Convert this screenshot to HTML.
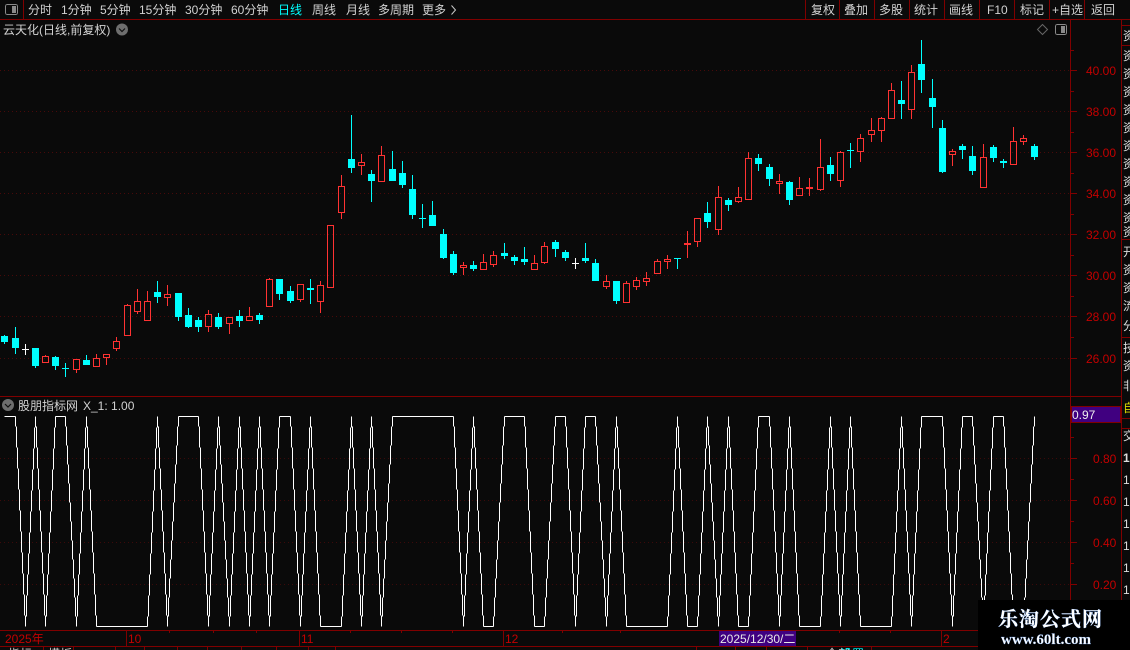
<!DOCTYPE html>
<html><head><meta charset="utf-8"><style>
html,body{margin:0;padding:0;background:#0a0a0a;overflow:hidden}
svg{display:block}
text{font-family:"WenQuanYi Zen Hei","Liberation Sans","Noto Sans CJK SC",sans-serif;font-size:12px}
.t{fill:#d2d2d2}
.a{fill:#c40000;font-family:"Liberation Sans",sans-serif}
.c{shape-rendering:crispEdges}
</style></head><body>
<svg width="1130" height="650" viewBox="0 0 1130 650" xmlns="http://www.w3.org/2000/svg">
<defs>
<path id="d" d="M0 0V10M1 10V31M2 31V52M3 52V73M4 73V94M5 94V115M6 115V136M7 136V157M8 157V178M9 178V199M10 199V210"/>
<path id="D" d="M0 0V10M1 10V29M2 29V48M3 48V67M4 67V86M5 86V105M6 105V124M7 124V143M8 143V162M9 162V181M10 181V200M11 200V210"/>
<path id="u" d="M0 210V200M1 200V179M2 179V158M3 158V137M4 137V116M5 116V95M6 95V74M7 74V53M8 53V32M9 32V11M10 11V0"/>
<path id="U" d="M0 210V200M1 200V181M2 181V162M3 162V143M4 143V124M5 124V105M6 105V86M7 86V67M8 67V48M9 48V29M10 29V10M11 10V0"/>
</defs>
<rect width="1130" height="650" fill="#0a0a0a"/>
<!-- grid -->
<path class="c" d="M0 70.5H1070M0 111.5H1070M0 152.5H1070M0 193.5H1070M0 234.5H1070M0 275.5H1070M0 316.5H1070M0 358.5H1070" stroke="#480a0a" stroke-dasharray="1 3" fill="none"/>
<path class="c" d="M0 458.5H1070M0 500.5H1070M0 542.5H1070M0 584.5H1070" stroke="#3c0a0a" stroke-dasharray="1 3" fill="none"/>
<!-- frame lines -->
<path class="c" stroke="#800000" fill="none" d="M0 19.5H1130M0 396.5H1121M0 630.5H1130M0 646.5H1130M1070.5 20V630M1121.5 20V650M23.5 0V19M805.5 0V19M839.5 0V19M874.5 0V19M909.5 0V19M944.5 0V19M979.5 0V19M1014.5 0V19M1049.5 0V19M1084.5 0V19M1121.5 25.5H1130M1121.5 45.5H1130M1121.5 239.5H1130M1121.5 337.5H1130M1121.5 418.5H1130M1121.5 428.5H1130
M1071 70.5h6M1071 91.5h3M1071 111.5h6M1071 132.5h3M1071 152.5h6M1071 173.5h3M1071 193.5h6M1071 214.5h3M1071 234.5h6M1071 255.5h3M1071 275.5h6M1071 296.5h3M1071 316.5h6M1071 337.5h3M1071 358.5h6M1071 50.5h3
M1071 437.5h3M1071 458.5h6M1071 479.5h3M1071 500.5h6M1071 521.5h3M1071 542.5h6M1071 563.5h3M1071 584.5h6M1071 605.5h3
M126.5 631V646M299.5 631V646M503.5 631V646M941.5 631V646M169.5 631v2M213.5 631v2M256.5 631v2M350.5 631v2M401.5 631v2M452.5 631v2M562.5 631v2M620.5 631v2M839.5 631v2M890.5 631v2
M43.5 647V650M73.5 647V650M115.5 647V650M144.5 647V650M177.5 647V650M207.5 647V650M241.5 647V650M276.5 647V650M308.5 647V650M335.5 647V650M696.5 647V650M735.5 647V650M766.5 647V650M807.5 647V650M871.5 647V650"/>
<!-- red candles -->
<path class="c" fill="none" stroke="#ff3232" d="M45.5 355v1M42.5 356.5h6v6h-6zM73.5 359.5h6v10h-6zM76.5 370V373M96.5 354V358M93.5 358.5h6v8h-6zM103.5 354.5h6v3h-6zM106.5 358V365M116.5 337V341M113.5 341.5h6v7h-6zM116.5 349V351M127.5 304V305M124.5 305.5h6v30h-6zM137.5 289V301M134.5 301.5h6v10h-6zM137.5 312V314M147.5 291V301M144.5 301.5h6v19h-6zM167.5 285V294M164.5 294.5h6v3h-6zM167.5 298V306M208.5 310V314M205.5 314.5h6v12h-6zM208.5 327V332M226.5 317.5h6v6h-6zM229.5 324V334M249.5 307V316M246.5 316.5h6v4h-6zM269.5 278V279M266.5 279.5h6v27h-6zM297.5 284.5h6v15h-6zM300.5 300V302M320.5 281V285M317.5 285.5h6v16h-6zM320.5 302V313M327.5 225.5h6v62h-6zM341.5 175V186M338.5 186.5h6v26h-6zM341.5 213V219M361.5 154V162M358.5 162.5h6v3h-6zM361.5 166V175M381.5 146V155M378.5 155.5h6v26h-6zM463.5 262V265M460.5 265.5h6v2h-6zM463.5 268V275M483.5 254V262M480.5 262.5h6v7h-6zM493.5 251V255M490.5 255.5h6v9h-6zM493.5 265V267M534.5 255V263M531.5 263.5h6v6h-6zM544.5 242V246M541.5 246.5h6v16h-6zM544.5 263V264M606.5 275V281M603.5 281.5h6v5h-6zM606.5 287V289M626.5 281V283M623.5 283.5h6v19h-6zM636.5 277V280M633.5 280.5h6v6h-6zM636.5 287V290M646.5 272V278M643.5 278.5h6v3h-6zM646.5 282V286M657.5 259V261M654.5 261.5h6v12h-6zM667.5 255V259M664.5 259.5h6v2h-6zM667.5 262V269M687.5 231V258M684 243.5h7M684 244.5h7M694.5 218.5h6v23h-6zM697.5 242V247M718.5 186V197M715.5 197.5h6v32h-6zM718.5 230V235M738.5 187V197M735.5 197.5h6v4h-6zM738.5 202V203M748.5 152V158M745.5 158.5h6v41h-6zM779.5 174V181M776.5 181.5h6v2h-6zM779.5 184V194M799.5 177V188M796.5 188.5h6v7h-6zM809.5 178V196M806 187.5h7M806 188.5h7M820.5 139V167M817.5 167.5h6v22h-6zM820.5 190V191M840.5 151V152M837.5 152.5h6v28h-6zM840.5 181V187M860.5 134V138M857.5 138.5h6v13h-6zM860.5 152V162M871.5 118V130M868.5 130.5h6v4h-6zM871.5 135V142M881.5 117V118M878.5 118.5h6v12h-6zM881.5 131V142M891.5 83V90M888.5 90.5h6v28h-6zM911.5 65V72M908.5 72.5h6v37h-6zM911.5 110V119M952.5 149V151M949.5 151.5h6v3h-6zM952.5 155V166M983.5 144V157M980.5 157.5h6v30h-6zM1013.5 127V141M1010.5 141.5h6v23h-6zM1023.5 135V138M1020.5 138.5h6v3h-6zM1023.5 142V145"/>
<!-- cyan wicks -->
<path class="c" fill="none" stroke="#00ffff" d="M4.5 335V344M15.5 327V354M35.5 348V368M55.5 356V370M65.5 363V377M62 368.5h7M86.5 355V365M157.5 281V303M178.5 293V321M188.5 308V328M198.5 317V332M218.5 313V329M239.5 310V327M259.5 313V324M279.5 279V300M290.5 286V303M310.5 279V304M351.5 115V173M371.5 170V202M392.5 151V181M402.5 161V188M412.5 175V219M422.5 204V228M419 218.5h7M432.5 201V226M443.5 229V259M453.5 251V275M473.5 261V271M504.5 243V259M514.5 255V265M524.5 247V265M555.5 240V257M565.5 250V261M585.5 243V263M595.5 259V281M616.5 281V304M677.5 258V269M674 258.5h7M707.5 202V228M728.5 198V211M758.5 154V171M769.5 164V186M789.5 181V205M830.5 157V181M850.5 143V168M847 150.5h7M901.5 81V119M921.5 40V93M932.5 79V128M942.5 120V173M962.5 144V159M972.5 146V175M993.5 145V162M1003.5 159V168M1000 161.5h7M1000 162.5h7M1034.5 144V160"/>
<!-- cyan bodies -->
<path class="c" fill="#00ffff" d="M1 336h7v6h-7zM12 338h7v10h-7zM32 348h7v18h-7zM52 357h7v9h-7zM83 360h7v5h-7zM154 292h7v5h-7zM175 293h7v24h-7zM185 315h7v12h-7zM195 320h7v7h-7zM215 317h7v10h-7zM236 316h7v5h-7zM256 315h7v5h-7zM276 279h7v15h-7zM287 291h7v10h-7zM307 288h7v2h-7zM348 159h7v9h-7zM368 174h7v7h-7zM389 169h7v12h-7zM399 173h7v12h-7zM409 189h7v26h-7zM429 215h7v11h-7zM440 234h7v24h-7zM450 254h7v19h-7zM470 265h7v4h-7zM501 253h7v3h-7zM511 257h7v4h-7zM521 259h7v3h-7zM552 242h7v7h-7zM562 252h7v6h-7zM582 258h7v3h-7zM592 263h7v18h-7zM613 281h7v20h-7zM704 213h7v9h-7zM725 200h7v5h-7zM755 158h7v6h-7zM766 167h7v12h-7zM786 182h7v18h-7zM827 165h7v9h-7zM898 100h7v4h-7zM918 64h7v16h-7zM929 98h7v9h-7zM939 128h7v44h-7zM959 146h7v4h-7zM969 156h7v15h-7zM990 147h7v11h-7zM1031 146h7v11h-7z"/>
<!-- white crosses -->
<path class="c" fill="none" stroke="#fff" d="M25.5 344V355M22 349.5h7M575.5 258V269M572 263.5h7"/>
<!-- indicator -->
<g class="c" fill="none" stroke="#fff">
<path d="M4.5 416.5H15.5M55.5 416.5H65.5M178.5 416.5H198.5M279.5 416.5H290.5M392.5 416.5H453.5M504.5 416.5H524.5M555.5 416.5H565.5M585.5 416.5H595.5M758.5 416.5H769.5M921.5 416.5H942.5M962.5 416.5H972.5M993.5 416.5H1003.5M96.5 626.5H147.5M320.5 626.5H341.5M483.5 626.5H493.5M534.5 626.5H544.5M626.5 626.5H667.5M687.5 626.5H697.5M738.5 626.5H748.5M799.5 626.5H820.5M860.5 626.5H891.5M1013.5 626.5H1023.5"/>
<g transform="translate(0.5 416.5)">
<use href="#d" x="15"/><use href="#u" x="25"/><use href="#d" x="35"/><use href="#u" x="45"/><use href="#D" x="65"/><use href="#u" x="76"/><use href="#d" x="86"/><use href="#u" x="147"/><use href="#d" x="157"/><use href="#U" x="167"/><use href="#d" x="198"/><use href="#u" x="208"/><use href="#D" x="218"/><use href="#u" x="229"/><use href="#d" x="239"/><use href="#u" x="249"/><use href="#d" x="259"/><use href="#u" x="269"/><use href="#d" x="290"/><use href="#u" x="300"/><use href="#d" x="310"/><use href="#u" x="341"/><use href="#d" x="351"/><use href="#u" x="361"/><use href="#d" x="371"/><use href="#U" x="381"/><use href="#d" x="453"/><use href="#u" x="463"/><use href="#d" x="473"/><use href="#U" x="493"/><use href="#d" x="524"/><use href="#U" x="544"/><use href="#d" x="565"/><use href="#u" x="575"/><use href="#D" x="595"/><use href="#u" x="606"/><use href="#d" x="616"/><use href="#u" x="667"/><use href="#d" x="677"/><use href="#u" x="697"/><use href="#D" x="707"/><use href="#u" x="718"/><use href="#d" x="728"/><use href="#u" x="748"/><use href="#d" x="769"/><use href="#u" x="779"/><use href="#d" x="789"/><use href="#u" x="820"/><use href="#d" x="830"/><use href="#u" x="840"/><use href="#d" x="850"/><use href="#u" x="891"/><use href="#d" x="901"/><use href="#u" x="911"/><use href="#d" x="942"/><use href="#u" x="952"/><use href="#D" x="972"/><use href="#u" x="983"/><use href="#d" x="1003"/><use href="#U" x="1023"/>
</g>
</g>
<!-- toolbar icon -->
<rect x="5.5" y="4.5" width="12" height="10" rx="2" fill="none" stroke="#8a8a8a" class="c"/><rect x="12" y="6" width="4" height="7" fill="#8a8a8a" class="c"/>
<!-- toolbar text -->
<g class="t">
<text x="28" y="14">分时</text><text x="61" y="14">1分钟</text><text x="100" y="14">5分钟</text><text x="139" y="14">15分钟</text><text x="185" y="14">30分钟</text><text x="231" y="14">60分钟</text>
<text x="278" y="14" style="fill:#00ffff">日线</text><text x="312" y="14">周线</text><text x="346" y="14">月线</text><text x="378" y="14">多周期</text><text x="422" y="14">更多</text>
<text x="811" y="14">复权</text><text x="844" y="14">叠加</text><text x="879" y="14">多股</text><text x="914" y="14">统计</text><text x="949" y="14">画线</text><text x="987" y="14">F10</text><text x="1020" y="14">标记</text><text x="1052" y="14">+自选</text><text x="1091" y="14">返回</text>
<text x="3" y="34">云天化(日线,前复权)</text>
<text x="18" y="410">股朋指标网</text><text x="83" y="410">X_1: 1.00</text>
</g>
<path d="M451.5 5.5l4 4.5-4 4.5" fill="none" stroke="#c8c8c8"/>
<!-- circle icons -->
<circle cx="122" cy="29.5" r="6" fill="#6e6e6e"/><path d="M119 28.5l3 3 3-3" fill="none" stroke="#111" stroke-width="1.2"/>
<circle cx="8" cy="405" r="6" fill="#6e6e6e"/><path d="M5 404l3 3 3-3" fill="none" stroke="#111" stroke-width="1.2"/>
<!-- diamond + panel icon -->
<path d="M1042.5 24.5l5 5-5 5-5-5z" fill="none" stroke="#666"/>
<rect x="1055.5" y="24.5" width="11" height="10" rx="2" fill="none" stroke="#8a8a8a" class="c"/><rect x="1061" y="26" width="4" height="7" fill="#8a8a8a" class="c"/>
<!-- axis labels -->
<g class="a"><text class="a" x="1086" y="75">40.00</text><text class="a" x="1086" y="116">38.00</text><text class="a" x="1086" y="157">36.00</text><text class="a" x="1086" y="198">34.00</text><text class="a" x="1086" y="239">32.00</text><text class="a" x="1086" y="280">30.00</text><text class="a" x="1086" y="321">28.00</text><text class="a" x="1086" y="363">26.00</text>
<text class="a" x="1093" y="463">0.80</text><text class="a" x="1093" y="505">0.60</text><text class="a" x="1093" y="547">0.40</text><text class="a" x="1093" y="589">0.20</text></g>
<!-- 0.97 box -->
<rect x="1071.5" y="406.5" width="49" height="16" fill="#400080" stroke="#800000" class="c"/>
<text x="1072" y="419" style="fill:#eee;font-family:'Liberation Sans',sans-serif">0.97</text>
<!-- right column -->
<g style="fill:#ddd">
<text x="1123" y="40">资</text><text x="1123" y="60">资</text><text x="1123" y="78">资</text><text x="1123" y="96">资</text><text x="1123" y="114">资</text><text x="1123" y="132">资</text><text x="1123" y="150">资</text><text x="1123" y="168">资</text><text x="1123" y="186">资</text><text x="1123" y="204">资</text><text x="1123" y="222">资</text><text x="1123" y="236">资</text>
<text x="1123" y="256">开</text><text x="1123" y="274">资</text><text x="1123" y="292">资</text><text x="1123" y="310">流</text><text x="1123" y="330">分</text>
<text x="1123" y="352">技</text><text x="1123" y="370">资</text><text x="1123" y="390">非</text>
<text x="1123" y="412" style="fill:#d8d800">自</text><text x="1123" y="440">交</text>
<text x="1123" y="462" style="font-weight:bold">1</text><text x="1123" y="484">1</text><text x="1123" y="506">1</text><text x="1123" y="528">1</text><text x="1123" y="550">1</text><text x="1123" y="572">1</text><text x="1123" y="594">1</text>
</g>
<!-- time axis -->
<g class="a"><text class="a" x="5" y="643">2025年</text><text class="a" x="128" y="643">10</text><text class="a" x="301" y="643">11</text><text class="a" x="505" y="643">12</text><text class="a" x="943" y="643">2</text></g>
<rect x="719" y="631" width="77" height="15" fill="#400080" class="c"/>
<text x="720" y="643" style="fill:#e8e8e8">2025/12/30/二</text>
<!-- bottom clipped -->
<g style="fill:#ccc"><text x="8" y="658">指标</text><text x="48" y="658">模板</text><text x="826" y="658">全部</text><text x="840" y="658" style="fill:#00ffff">设置</text></g>
<!-- watermark -->
<rect x="978" y="600" width="152" height="50" fill="#000"/>
<text x="998" y="626" style="fill:#fff;font-family:'Noto Serif CJK SC',serif;font-size:20px;font-weight:bold;letter-spacing:1px;paint-order:stroke" stroke="#6fa8ff" stroke-width="0.4">乐淘公式网</text>
<text x="1001" y="644" style="fill:#fff;font-family:'Liberation Serif',serif;font-size:15px;font-weight:bold" stroke="#6fa8ff" stroke-width="0.2">www.60lt.com</text>
</svg>
</body></html>
